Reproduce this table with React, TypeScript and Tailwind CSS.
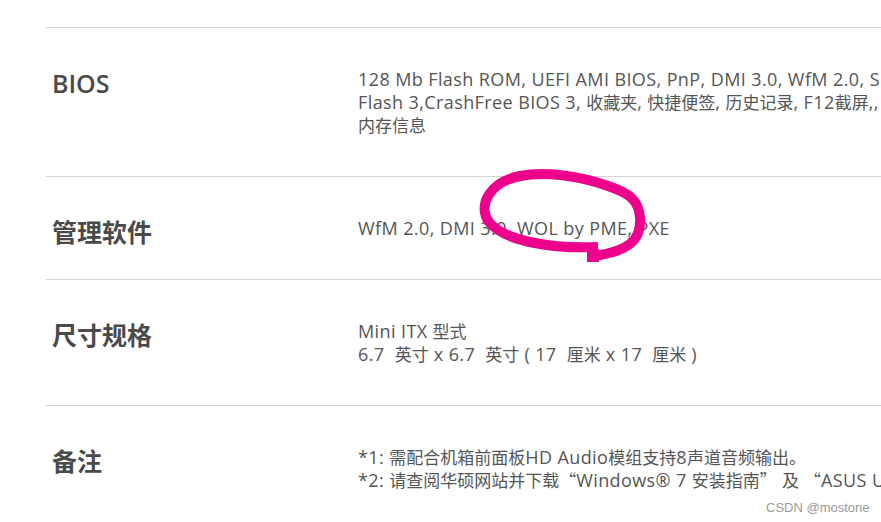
import React from "react";

function Seg({ text }: { text: string }) {
  const parts = text.split(/([\u3000-\u303f\u4e00-\u9fff\uff00-\uffef“”]+)/);
  return (
    <>
      {parts.map((p, i) =>
        i % 2 === 1 ? (
          <span key={i} className="text-[17px] leading-none tracking-normal font-['Noto_Sans_CJK_SC',sans-serif]">
            {p}
          </span>
        ) : (
          <span key={i}>{p}</span>
        )
      )}
    </>
  );
}

function Row({ label, lines }: { label: string; lines: string[] }) {
  return (
    <div className="flex border-t border-[#d2d2d2] pt-10 pb-[39px]">
      <div className="w-[312px] shrink-0 pl-[6px] h-[23px]">
        <div className="text-[25px] leading-[30px] font-semibold text-[#4a4a4a] whitespace-nowrap">
          {label}
        </div>
      </div>
      <div className="text-[18px] tracking-[0.4px] text-[#555555]">
        {lines.map((l, i) => (
          <div key={i} className="whitespace-pre h-[23px] leading-[23px]">
            <Seg text={l} />
          </div>
        ))}
      </div>
    </div>
  );
}

export default function App() {
  return (
    <div className="relative w-[881px] h-[522px] overflow-hidden bg-white font-['Open_Sans','Noto_Sans_CJK_SC',sans-serif]">
      <div className="ml-[46px] mt-[27px] w-[1400px]">
        <Row
          label="BIOS"
          lines={[
            "128 Mb Flash ROM, UEFI AMI BIOS, PnP, DMI 3.0, WfM 2.0, SM BIOS 3.2, ACPI 6.2, 多国语言 BIOS",
            "Flash 3,CrashFree BIOS 3, 收藏夹, 快捷便签, 历史记录, F12截屏,, F3 快捷功能, 华硕 DRAM SPD",
            "内存信息",
          ]}
        />
        <Row label="管理软件" lines={["WfM 2.0, DMI 3.0, WOL by PME, PXE"]} />
        <Row
          label="尺寸规格"
          lines={["Mini ITX 型式", "6.7  英寸 x 6.7  英寸 ( 17  厘米 x 17  厘米 )"]}
        />
        <Row
          label="备注"
          lines={[
            "*1: 需配合机箱前面板HD Audio模组支持8声道音频输出。",
            "*2: 请查阅华硕网站并下载“Windows® 7 安装指南” 及 “ASUS USB 3.0 Boost 说明”",
          ]}
        />
      </div>
      <svg
        className="absolute left-0 top-0 pointer-events-none"
        width="881"
        height="522"
        viewBox="0 0 881 522"
      >
        <path
          d="M 598 247 C 555 249, 505 242, 489 222 C 477 205, 490 182, 520 176 C 545 171, 580 176, 608 186 C 629 193, 639 200, 640 218 C 641 236, 633 246, 613 252 C 603 255, 595 256, 587 256"
          fill="none"
          stroke="#ec008c"
          strokeWidth="10"
        />
        <rect x="587" y="249" width="12" height="13" fill="#ec008c" />
      </svg>
      <div className="absolute left-[766px] top-[498px] text-[13px] text-[#9a9a9a] font-['Liberation_Sans',Arial,sans-serif]">
        CSDN @mostone
      </div>
    </div>
  );
}
